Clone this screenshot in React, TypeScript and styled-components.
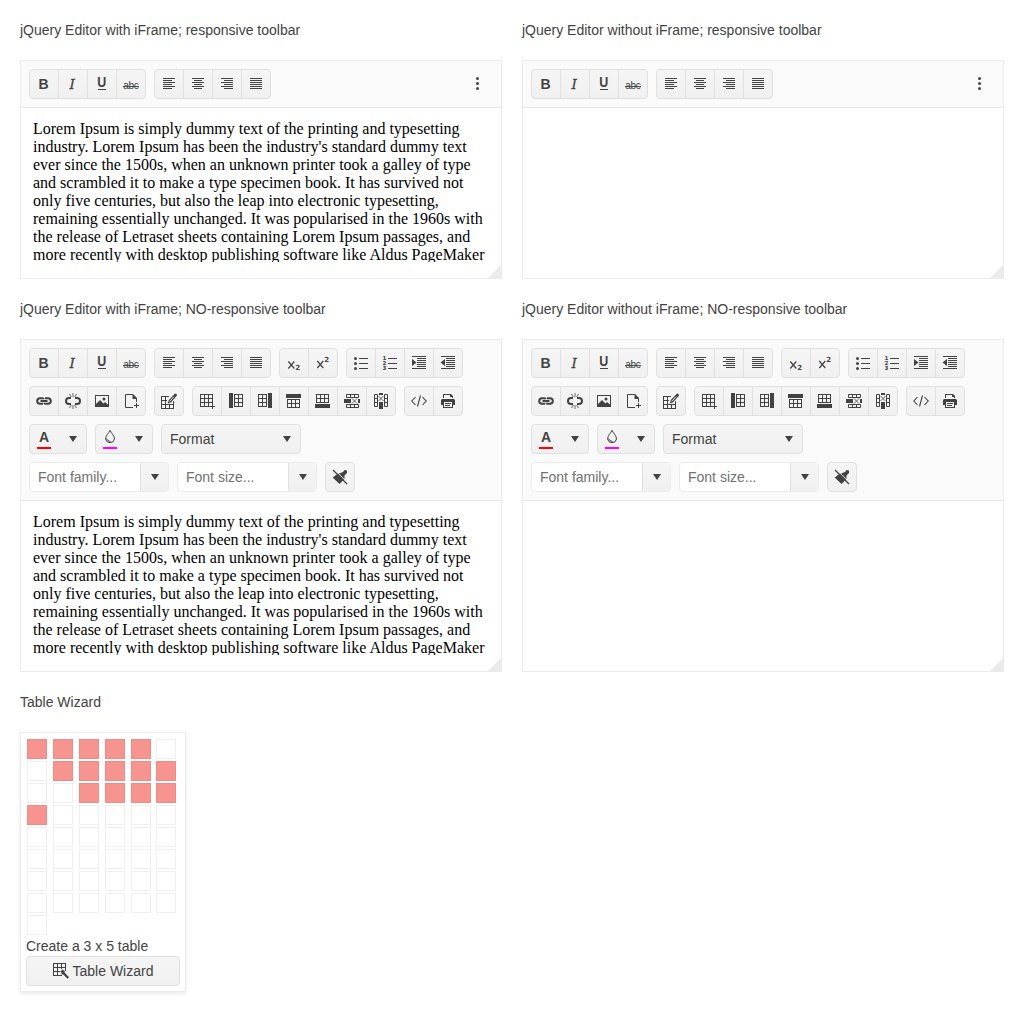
import React from "react";
import styled, { createGlobalStyle, css } from "styled-components";

const GlobalStyle = createGlobalStyle`
  * { box-sizing: border-box; }
  body {
    margin: 0;
    background: #fff;
    color: #424242;
    font: 14px/20px "Liberation Sans", Arial, sans-serif;
  }
`;

const Page = styled.main`
  width: 1024px;
  height: 1011px;
  padding: 20px;
  display: grid;
  grid-template-columns: 482px 482px;
  grid-auto-rows: max-content;
  gap: 20px;
`;

const Section = styled.section`
  display: flex;
  flex-direction: column;
  align-items: flex-start;
  gap: 20px;
`;

const Title = styled.div`
  height: 20px;
  white-space: nowrap;
`;

const EditorBox = styled.div`
  width: 100%;
  border: 1px solid #ebebeb;
  background: #fff;
`;

const Toolbar = styled.div`
  display: flex;
  flex-direction: column;
  gap: 8px;
  padding: 8px;
  background: #fafafa;
  border-bottom: 1px solid #e6e6e6;
`;

const ToolRow = styled.div`
  display: flex;
  gap: 8px;
  height: 30px;
`;

const surface = css`
  border: 1px solid #e0e0e0;
  background: linear-gradient(#f5f5f5, #f0f0f0);
  color: #424242;
`;

const Group = styled.div`
  display: flex;
`;

const ToolButton = styled.button`
  ${surface}
  width: 30px;
  height: 30px;
  padding: 0;
  display: flex;
  align-items: center;
  justify-content: center;
  & + & { margin-left: -1px; }
  &:first-child { border-top-left-radius: 4px; border-bottom-left-radius: 4px; }
  &:last-child { border-top-right-radius: 4px; border-bottom-right-radius: 4px; }
`;

const OverflowButton = styled.button`
  margin-left: auto;
  width: 30px;
  height: 30px;
  padding: 0;
  border: 0;
  background: none;
  color: #424242;
  display: flex;
  align-items: center;
  justify-content: center;
`;

const ColorPicker = styled.div`
  ${surface}
  width: 58px;
  height: 30px;
  border-radius: 4px;
  display: flex;
  align-items: center;
  justify-content: space-between;
  padding: 0 5px 0 6px;
`;

const ColorFace = styled.span`
  display: flex;
  flex-direction: column;
  align-items: center;
  width: 16px;
  height: 22px;
`;

const ColorLine = styled.span<{ $color: string }>`
  width: 14px;
  height: 2px;
  margin-top: 3px;
  background: ${(p) => p.$color};
`;

const Dropdown = styled.div`
  ${surface}
  width: 140px;
  height: 30px;
  border-radius: 4px;
  display: flex;
  align-items: center;
  justify-content: space-between;
  padding: 0 5px 0 8px;
`;

const Combo = styled.div`
  width: 140px;
  height: 30px;
  border: 1px solid #ebebeb;
  border-radius: 4px;
  background: #fff;
  color: #717171;
  display: flex;
  overflow: hidden;
`;

const ComboText = styled.span`
  flex: 1;
  padding: 4px 8px;
`;

const ComboArrow = styled.span`
  width: 28px;
  border-left: 1px solid #e0e0e0;
  padding-left: 6px;
  background: linear-gradient(#f5f5f5, #f0f0f0);
  color: #424242;
  display: flex;
  align-items: center;
`;

const Content = styled.div`
  height: 170px;
  padding: 12px 0 16px 12px;
  display: flex;
  position: relative;
`;

const Frame = styled.div`
  height: 142px;
  width: 456px;
  overflow: hidden;
  color: #000;
  font: 16px/18px "Liberation Serif", "Times New Roman", serif;
`;

const ResizeHandle = styled.span`
  position: absolute;
  right: 0;
  bottom: 0;
  width: 13px;
  height: 13px;
  background: #ebebeb;
  clip-path: polygon(100% 0, 100% 100%, 0 100%);
`;

const Wizard = styled.div`
  width: 166px;
  padding: 5px;
  border: 1px solid #ebebeb;
  box-shadow: 0 2px 4px rgba(0, 0, 0, 0.08);
  background: #fff;
`;

const Cells = styled.div`
  display: flex;
  flex-wrap: wrap;
  column-gap: 3.89px;
`;

const Cell = styled.span<{ $on: boolean }>`
  width: 20px;
  height: 20px;
  margin: 1px;
  border: 1px solid ${(p) => (p.$on ? "#ea8c88" : "#efefef")};
  background: ${(p) => (p.$on ? "#f8948f" : "#fff")};
`;

const WizardButton = styled.button`
  ${surface}
  width: 154px;
  height: 30px;
  border-radius: 4px;
  display: flex;
  align-items: center;
  justify-content: center;
  gap: 4px;
  padding: 0;
  font: inherit;
`;

const Svg = styled.svg`
  display: block;
  flex: none;
  width: 16px;
  height: 16px;
  fill: currentColor;
  overflow: visible;
`;

const lines = (rows: [number, number, number][]) =>
  rows.map(([x, y, w]) => `M${x} ${y}h${w}v1h${-w}z`).join("");

const grid = (x: number, y: number, cols: number, rows: number) => {
  const w = cols * 4 + 1;
  const h = rows * 4 + 1;
  let d = "";
  for (let r = 0; r <= rows; r++) d += `M${x} ${y + r * 4}h${w}v1h${-w}z`;
  for (let c = 0; c <= cols; c++) d += `M${x + c * 4} ${y}h1v${h}h-1z`;
  return d;
};

const stroke = { fill: "none", stroke: "currentColor" };
const sans = '"Liberation Sans", Arial, sans-serif';
const wide = '"DejaVu Sans", sans-serif';
const slab = '"DejaVu Serif", serif';

const icons: Record<string, React.ReactNode> = {
  bold: <text x="2.5" y="13" fontFamily={sans} fontWeight="700" fontSize="14">B</text>,
  italic: <text x="4.600" y="13" fontFamily={slab} fontStyle="italic" fontSize="13.500" stroke="currentColor" strokeWidth=".3">I</text>,
  underline: (
    <>
      <text x="3.300" y="11" fontFamily={sans} fontWeight="700" fontSize="14" textLength="9" lengthAdjust="spacingAndGlyphs">U</text>
      <path d="M4 13h8v1H4z" />
    </>
  ),
  strike: (
    <>
      <text x="0.2" y="13" fontFamily={sans} fontSize="10" textLength="15.6">abc</text>
      <path d="M0 10h16v1H0z" opacity=".9" />
    </>
  ),
  left: <path d={lines([[2, 2, 12], [2, 4, 9], [2, 6, 12], [2, 8, 9], [2, 10, 12], [2, 12, 9]])} />,
  center: <path d={lines([[2, 2, 12], [4, 4, 8], [2, 6, 12], [4, 8, 8], [2, 10, 12], [4, 12, 8]])} />,
  right: <path d={lines([[2, 2, 12], [5, 4, 9], [2, 6, 12], [5, 8, 9], [2, 10, 12], [5, 12, 9]])} />,
  justify: <path d={lines([2, 4, 6, 8, 10, 12].map((y) => [2, y, 12]))} />,
  sub: (
    <>
      <path {...stroke} strokeWidth="1.2" d="M2.3 6.5l6 7M8.3 6.5l-6 7" />
      <text x="9.3" y="15" fontFamily={wide} fontWeight="700" fontSize="7">2</text>
    </>
  ),
  sup: (
    <>
      <path {...stroke} strokeWidth="1.2" d="M2.3 6l6 7M8.3 6l-6 7" />
      <text x="9.3" y="7" fontFamily={wide} fontWeight="700" fontSize="7">2</text>
    </>
  ),
  bullets: (
    <>
      <circle cx="2.5" cy="3.5" r="1.5" /><circle cx="2.5" cy="8.5" r="1.5" /><circle cx="2.5" cy="13.5" r="1.5" />
      <path d={lines([[6, 3, 9], [6, 8, 9], [6, 13, 9]])} />
    </>
  ),
  numbers: (
    <>
      <g fontFamily={wide} fontWeight="700" fontSize="5.6">
        <text x="0.5" y="5">1</text><text x="0.5" y="10">2</text><text x="0.5" y="15">3</text>
      </g>
      <path d={lines([[6, 3, 9], [6, 8, 9], [6, 13, 9]])} />
    </>
  ),
  indent: <path d={lines([[1, 1, 14], [6, 3, 9], [6, 5, 9], [6, 7, 9], [6, 9, 9], [6, 11, 9], [1, 13, 14]]) + "M1 4l4.500 3.500L1 11z"} />,
  outdent: <path d={lines([[1, 1, 14], [6, 3, 9], [6, 5, 9], [6, 7, 9], [6, 9, 9], [6, 11, 9], [1, 13, 14]]) + "M5 4L.5 7.500 5 11z"} />,
  link: <path {...stroke} strokeWidth="2" d="M7 10.8H4a2.8 2.8 0 010-5.6h2.500q1 0 1.300 1M9 5.200h3a2.800 2.800 0 010 5.600H9.500q-1 0-1.300-1M4.500 8h7" />,
  unlink: (
    <>
      <path {...stroke} strokeWidth="2" d="M6 11H4a3 3 0 010-6h2M10 5h2a3 3 0 010 6h-2" />
      <path {...stroke} strokeWidth="1.200" opacity=".65" d="M8 0v4M4.500 1l1.800 3M11.500 1L9.700 4M8 12v4M4.500 15l1.800-3M11.500 15l-1.800-3" />
    </>
  ),
  image: <path fillRule="evenodd" d="M1 2h14v12H1zM2 3v8l4-4 3.500 3.500L11 9l3 2.500V3zM10 4.500a1.500 1.500 0 110 3 1.500 1.500 0 010-3z" />,
  file: (
    <>
      <path {...stroke} d="M10 14.500H2.500v-13h7.500M13.500 5v4" />
      <path d="M9.500 1H10l4 4v1H9.500z" />
      <path d="M13 10h1v5h-1zM11 12h5v1h-5z" />
    </>
  ),
  tableEdit: (
    <>
      <path d="M0 3h8v1H0zM0 7h6v1H0zM0 11h13v1H0zM0 15h13v1H0zM0 3h1v13H0zM4 3h1v13H4zM8 11h1v5H8zM12 8h1v8h-1z" />
      <path d="M6.800 10.500l1-3.500L14 .5q2 0 2 2L9.800 9.500z" />
      <path d="M8.500 8.500L13 3.700" stroke="#f3f3f3" strokeWidth=".9" />
    </>
  ),
  tableInsert: <path d={grid(1, 1, 3, 3) + "M13 11h1v5h-1zM11 13h5v1h-5z"} />,
  colLeft: <path d={"M1 0h4v15H1z" + grid(6, 1, 2, 3)} />,
  colRight: <path d={"M11 0h4v15h-4z" + grid(1, 1, 2, 3)} />,
  rowAbove: <path d={"M0 1h15v4H0z" + grid(1, 6, 3, 2)} />,
  rowBelow: <path d={"M0 11h15v4H0z" + grid(1, 1, 3, 2)} />,
  rowDelete: (
    <>
      <path d="M0 6h7v4H0zM14 6h2v4h-2z" />
      <path {...stroke} d="M2.500 1.500h12v3h-12zM6.500 1v4M10.500 1v4M2.500 11.500h12v3h-12zM6.500 11v4M10.500 11v4" />
      <path {...stroke} opacity=".8" d="M8 5.500l5 5M13 5.500l-5 5" />
    </>
  ),
  colDelete: (
    <>
      <path d="M6 0h4v2H6zM6 9h4v7H6z" />
      <path {...stroke} d="M1.500 1.500h3v12h-3zM1 5.500h4M1 9.500h4M11.500 1.500h3v12h-3zM11 5.500h4M11 9.500h4" />
      <path {...stroke} opacity=".8" d="M5.500 3l5 5M10.500 3l-5 5" />
    </>
  ),
  code: <path {...stroke} strokeWidth="1.100" d="M4.500 4L.8 8l3.700 4M11.500 4l3.700 4-3.700 4M9.500 2.500l-3 11" />,
  print: (
    <path fillRule="evenodd" d="M3 5V1h8l2 2v2h-1V4h-2V2H4v3zM2 6h12l1 1v5h-2v3H3v-3H1V7zM4 9v5h8V9zM5 10h6v1H5zM5 12h5v1H5z" />
  ),
  dots: <><circle cx="7.500" cy="2.500" r="1.500" /><circle cx="7.500" cy="7.500" r="1.500" /><circle cx="7.500" cy="12.500" r="1.500" /></>,
  arrow: <path d="M4 5h8l-4 6z" />,
  letter: <text x="3.100" y="14" fontFamily={sans} fontWeight="700" fontSize="14">A</text>,
  drop: (
    <>
      <path {...stroke} d="M8 2.300C7 5 3.600 7.500 3.600 11a4.500 4.300 0 008.900 0C12.500 7.500 9 5 8 2.300z" />
      <path {...stroke} d="M4.500 10.500q.7 2.500 4 3" />
    </>
  ),
  clean: (
    <>
      <path d="M.7 8.500L6 4.500l6 6L7.500 15zM7 4.500l4-1.500L12.500 1 15 1.500V4l-2.500 2.500v3.500z" />
      <path {...stroke} strokeWidth="1.300" d="M1 1l14 14" />
    </>
  ),
  wizard: (
    <>
      <path d="M0 0h13v1H0zM0 4h13v1H0zM0 8h7v1H0zM0 12h9v1H0zM0 0h1v13H0zM4 0h1v13H4zM8 0h1v6H8zM12 0h1v8h-1z" />
      <path d="M7 8l2-.500L9.500 6l1 1.500 1.500.5-.7 1 .7 1L16 14.300 14.600 15.800 10 11.300l-1.500.500V9.500z" />
    </>
  ),
};

const Icon = ({ name }: { name: string }) => (
  <Svg viewBox="0 0 16 16" aria-hidden="true">{icons[name]}</Svg>
);

const Tools = ({ names }: { names: string[] }) => (
  <Group>
    {names.map((name) => (
      <ToolButton key={name} aria-label={name}><Icon name={name} /></ToolButton>
    ))}
  </Group>
);

const FORMATTING = ["bold", "italic", "underline", "strike"];
const ALIGNMENT = ["left", "center", "right", "justify"];

const LOREM =
  "Lorem Ipsum is simply dummy text of the printing and typesetting industry. Lorem Ipsum has been the industry's standard dummy text ever since the 1500s, when an unknown printer took a galley of type and scrambled it to make a type specimen book. It has survived not only five centuries, but also the leap into electronic typesetting, remaining essentially unchanged. It was popularised in the 1960s with the release of Letraset sheets containing Lorem Ipsum passages, and more recently with desktop publishing software like Aldus PageMaker";

const ColorTool = ({ icon, color }: { icon: string; color: string }) => (
  <ColorPicker>
    <ColorFace><Icon name={icon} /><ColorLine $color={color} /></ColorFace>
    <Icon name="arrow" />
  </ColorPicker>
);

const ComboBox = ({ label }: { label: string }) => (
  <Combo>
    <ComboText>{label}</ComboText>
    <ComboArrow><Icon name="arrow" /></ComboArrow>
  </Combo>
);

const Editor = ({ title, responsive, text }: { title: string; responsive?: boolean; text?: string }) => (
  <Section>
    <Title>{title}</Title>
    <EditorBox>
      <Toolbar>
        <ToolRow>
          <Tools names={FORMATTING} />
          <Tools names={ALIGNMENT} />
          {responsive ? (
            <OverflowButton aria-label="more"><Icon name="dots" /></OverflowButton>
          ) : (
            <>
              <Tools names={["sub", "sup"]} />
              <Tools names={["bullets", "numbers", "indent", "outdent"]} />
            </>
          )}
        </ToolRow>
        {!responsive && (
          <>
            <ToolRow>
              <Tools names={["link", "unlink", "image", "file"]} />
              <Tools names={["tableEdit"]} />
              <Tools names={["tableInsert", "colLeft", "colRight", "rowAbove", "rowBelow", "rowDelete", "colDelete"]} />
              <Tools names={["code", "print"]} />
            </ToolRow>
            <ToolRow>
              <ColorTool icon="letter" color="#ff0000" />
              <ColorTool icon="drop" color="#ff00ff" />
              <Dropdown>Format<Icon name="arrow" /></Dropdown>
            </ToolRow>
            <ToolRow>
              <ComboBox label="Font family..." />
              <ComboBox label="Font size..." />
              <Tools names={["clean"]} />
            </ToolRow>
          </>
        )}
      </Toolbar>
      <Content>
        {text && <Frame>{text}</Frame>}
        <ResizeHandle />
      </Content>
    </EditorBox>
  </Section>
);

const isSelected = (i: number) => i < 21 && i % 7 < 5;

export default function App() {
  return (
    <>
      <GlobalStyle />
      <Page>
        <Editor title="jQuery Editor with iFrame; responsive toolbar" responsive text={LOREM} />
        <Editor title="jQuery Editor without iFrame; responsive toolbar" responsive />
        <Editor title="jQuery Editor with iFrame; NO-responsive toolbar" text={LOREM} />
        <Editor title="jQuery Editor without iFrame; NO-responsive toolbar" />
        <Section>
          <Title>Table Wizard</Title>
          <Wizard>
            <Cells>
              {Array.from({ length: 49 }, (_, i) => <Cell key={i} $on={isSelected(i)} />)}
            </Cells>
            <div>Create a 3 x 5 table</div>
            <WizardButton><Icon name="wizard" />Table Wizard</WizardButton>
          </Wizard>
        </Section>
      </Page>
    </>
  );
}
